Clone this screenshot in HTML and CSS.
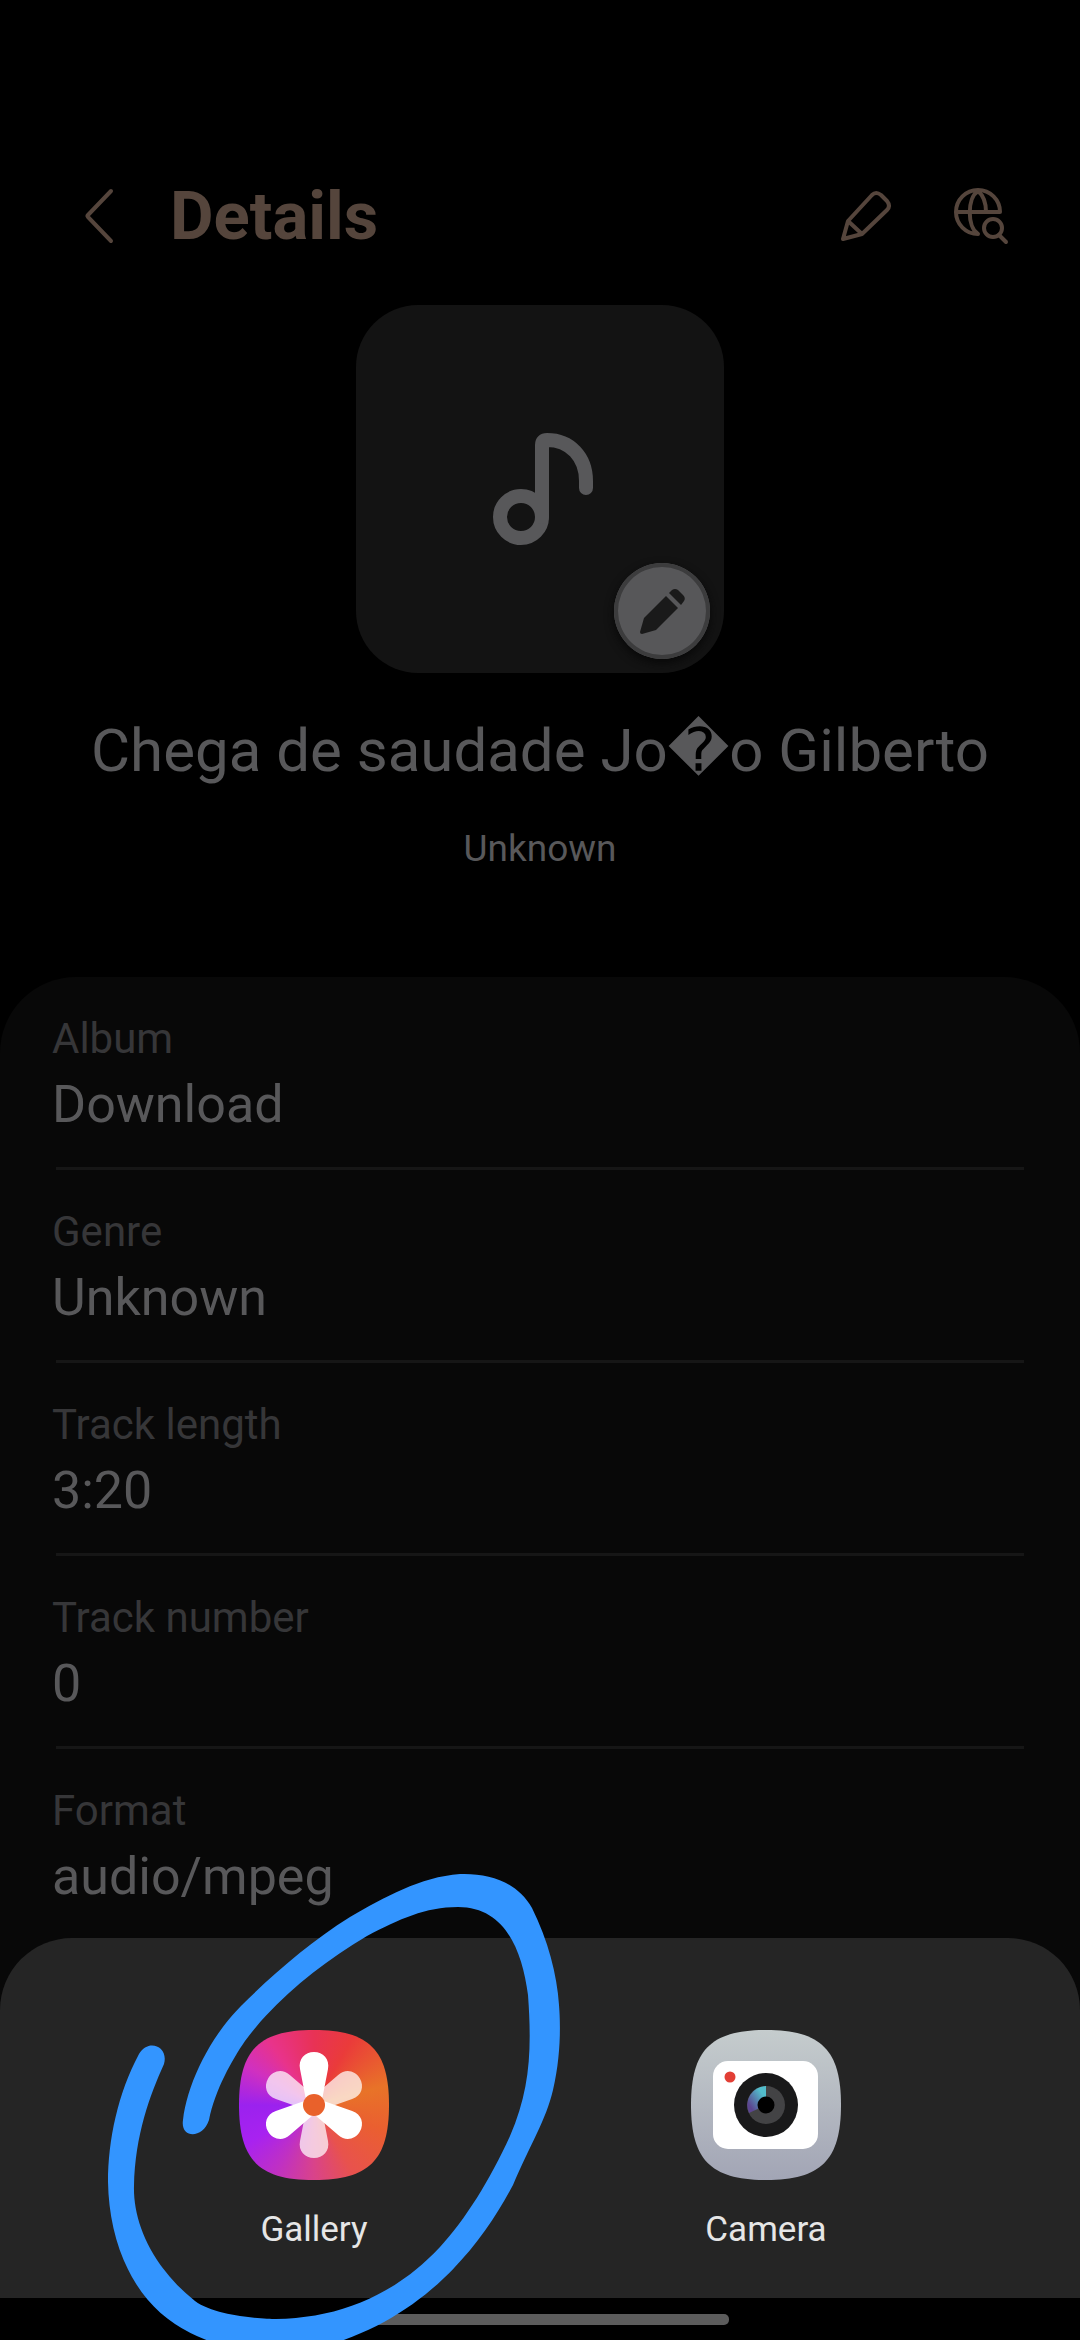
FILE: index.html
```html
<!DOCTYPE html>
<html lang="en">
<head>
    <meta charset="UTF-8">
    <meta name="viewport" content="width=device-width, initial-scale=1.0">
    <title>Details</title>
    <link rel="stylesheet" href="styles.css">
</head>
<body>
    <div class="page">
        <header class="top-bar">
            <button class="icon-button" aria-label="Back">
                <svg viewBox="0 0 60 60"><path d="M41 5 L18 29 Q17 30 18 31 L41 55"/></svg>
            </button>
            <h1 class="top-title">Details</h1>
            <button class="icon-button" aria-label="Edit">
                <svg viewBox="0 0 60 60"><path d="M12 35 L36 9 Q40 5 45 9 L51 15 Q55 20 51 24 L26 48 L7 53 Z M12 35 L26 48"/></svg>
            </button>
            <button class="icon-button" aria-label="Search the web">
                <svg viewBox="0 0 60 60">
                    <path d="M48 26 A22 22 0 1 0 26 48 M4 26 H48 M26 5 C15 12 15 41 26 48 M26 5 C32 10 34 18 34 26"/>
                    <circle cx="41" cy="42" r="9"/>
                    <path d="M47 49 L54 56"/>
                </svg>
            </button>
        </header>

        <section class="track">
            <div class="album-art">
                <svg class="note" viewBox="0 0 368 368">
                    <circle cx="165" cy="212" r="21"/>
                    <path d="M186 212 V140 Q186 135 191 135 C214 135 230 152 230 176 V183"/>
                </svg>
                <button class="edit-art" aria-label="Change image">
                    <svg viewBox="0 0 96 96">
                        <path d="M26 69 L30 55 L52 33 L64 45 L42 67 L28 71 Q26 71 26 69 Z"/>
                        <path d="M55 30 L58 27 Q61 25 64 27 L69 32 Q72 35 70 38 L67 42 Z"/>
                    </svg>
                </button>
            </div>
            <h2 class="track-title">Chega de saudade Jo<span class="bad-char">&#xFFFD;</span>o Gilberto</h2>
            <p class="track-artist">Unknown</p>
        </section>

        <dl class="details">
            <div class="detail">
                <dt>Album</dt>
                <dd>Download</dd>
            </div>
            <div class="detail">
                <dt>Genre</dt>
                <dd>Unknown</dd>
            </div>
            <div class="detail">
                <dt>Track length</dt>
                <dd>3:20</dd>
            </div>
            <div class="detail">
                <dt>Track number</dt>
                <dd>0</dd>
            </div>
            <div class="detail">
                <dt>Format</dt>
                <dd>audio/mpeg</dd>
            </div>
        </dl>
    </div>

    <div class="bottom">
        <div class="sheet">
            <button class="app">
                <span class="app-icon gallery">
                    <svg viewBox="0 0 150 150">
                        <defs>
                            <path id="petal" d="M67 70 L61 39 C59 29 66 22 75 22 S91 29 89 39 L83 70 Z"/>
                        </defs>
                        <g fill="#fff" fill-opacity="0.72">
                            <use href="#petal" transform="rotate(60 75 75)"/>
                            <use href="#petal" transform="rotate(180 75 75)"/>
                            <use href="#petal" transform="rotate(300 75 75)"/>
                        </g>
                        <g fill="#fff">
                            <use href="#petal"/>
                            <use href="#petal" transform="rotate(120 75 75)"/>
                            <use href="#petal" transform="rotate(240 75 75)"/>
                        </g>
                        <circle cx="75" cy="75" r="11" fill="#e9612b"/>
                    </svg>
                </span>
                <span>Gallery</span>
            </button>
            <button class="app">
                <span class="app-icon camera">
                    <svg viewBox="0 0 150 150">
                        <defs>
                            <linearGradient id="glint" x1="0" y1="1" x2="1" y2="0">
                                <stop offset="0.2" stop-color="#5b4590"/>
                                <stop offset="0.75" stop-color="#52bccb"/>
                            </linearGradient>
                        </defs>
                        <rect x="22" y="31" width="105" height="88" rx="15" fill="#fff"/>
                        <circle cx="39" cy="47" r="5.5" fill="#e23f35"/>
                        <circle cx="75" cy="75" r="32" fill="#19191a"/>
                        <circle cx="75" cy="75" r="19" fill="#434345"/>
                        <path d="M75 75 V56 A19 19 0 0 0 58 83 Z" fill="url(#glint)"/>
                        <circle cx="75" cy="75" r="8.5" fill="#000"/>
                    </svg>
                </span>
                <span>Camera</span>
            </button>
        </div>
        <div class="nav-bar"><div class="nav-handle"></div></div>
        <!-- hand drawn circle round the gallery app -->
        <svg class="marker" viewBox="0 0 600 580">
            <path d="M139 294 C118 333 108 380 108 422 C109 480 131 535 175 564 Q190 574 209 581 H341 C430 550 482 484 513 425 C530 385 546 360 553 330 C560 300 561 270 559 245 C557 215 548 180 532 148 C517 122 490 113 460 114 C420 117 385 137 350 157 C310 182 272 215 241 246 C209 278 187 325 183 360 C180 379 203 379 209 360 C215 330 232 300 245 281 C275 240 320 204 367 176 C400 159 425 147 458 147 C505 147 522 190 528 235 C532 290 530 330 510 376 C490 420 465 460 440 487 C395 535 340 558 276 559 C262 559 215 556 195 541 C150 505 133 460 134 426 C135 375 150 335 164 304 C169 286 148 278 139 294 Z"/>
        </svg>
    </div>
</body>
</html>
```
FILE: styles.css
```css
* {
    margin: 0;
    padding: 0;
    box-sizing: border-box;
}
body {
    background-color: #000000;
    color: #58585a;
    font-family: Roboto, "Noto Sans", sans-serif;
}
button {
    background: none;
    border: none;
    font: inherit;
    color: inherit;
}
svg {
    display: block;
}
.page {
    display: flex;
    flex-direction: column;
    height: 100vh;
    overflow: hidden;
}
.top-bar {
    display: flex;
    align-items: center;
    flex-shrink: 0;
    gap: 56px;
    height: 92px;
    margin-top: 170px;
    padding: 0 68px 0 70px;
    color: #55453c;
}
.top-title {
    flex-grow: 1;
    margin-left: -16px;
    font-size: 67px;
    font-weight: 700;
}
.icon-button {
    width: 60px;
    height: 60px;
}
.icon-button svg {
    fill: none;
    stroke: currentColor;
    stroke-width: 4;
    stroke-linecap: round;
    stroke-linejoin: round;
}
.track {
    flex-shrink: 0;
    padding-top: 43px;
    text-align: center;
}
.album-art {
    position: relative;
    width: 368px;
    height: 368px;
    margin: 0 auto;
    border-radius: 62px;
    background-color: #131313;
}
.note {
    fill: none;
    stroke: #58585a;
    stroke-width: 14;
    stroke-linecap: round;
}
.edit-art {
    position: absolute;
    right: 14px;
    bottom: 14px;
    width: 96px;
    height: 96px;
    border-radius: 50%;
    background-color: #575759;
    box-shadow: inset 0 0 0 4px #3c3c3d, 0 4px 10px #080808;
}
.edit-art svg {
    fill: #1a1a1a;
}
.track-title {
    height: 80px;
    margin-top: 38px;
    font-size: 60px;
    font-weight: 400;
    line-height: 80px;
}
.bad-char {
    font-family: "DejaVu Sans", sans-serif;
    line-height: 1;
}
.track-artist {
    margin-top: 34px;
    font-size: 37px;
    line-height: 48px;
}
.details {
    flex-grow: 1;
    margin-top: 104px;
    padding: 0 56px 0 52px;
    border-radius: 76px 76px 0 0;
    background-color: #080808;
}
.detail {
    padding-top: 38px;
}
.detail dt {
    font-size: 42px;
    line-height: 48px;
    color: #363638;
}
.detail dd {
    margin-top: 12px;
    font-size: 52px;
    line-height: 60px;
}
.detail:not(:last-child)::after {
    content: "";
    display: block;
    height: 3px;
    margin: 32px 0 0 4px;
    background-color: #161616;
}
.bottom {
    position: fixed;
    left: 0;
    right: 0;
    bottom: 0;
}
.sheet {
    display: flex;
    padding: 92px 88px 48px;
    border-radius: 72px 72px 0 0;
    background-color: #252525;
}
.app {
    flex: 1;
    display: flex;
    flex-direction: column;
    align-items: center;
    gap: 30px;
    font-size: 35px;
    line-height: 40px;
    color: #e6e6e6;
}
.app-icon {
    width: 150px;
    height: 150px;
    clip-path: path("M75 0 C130 0 150 20 150 75 C150 130 130 150 75 150 C20 150 0 130 0 75 C0 20 20 0 75 0 Z");
}
.gallery {
    background: conic-gradient(#e83255, #ea3b3a 30deg, #e87328 75deg, #ea5f30 110deg, #e8524d 150deg, #d9438a 180deg, #bf30c4 210deg, #a822f0 240deg, #9b22ee 270deg, #d030c0 300deg, #e8338b 325deg, #e83255);
}
.camera {
    background: linear-gradient(#c5cccd, #a2a5b5);
}
.nav-bar {
    height: 42px;
    padding-top: 16px;
    background-color: #000000;
}
.nav-handle {
    width: 35%;
    height: 11px;
    margin: 0 auto;
    border-radius: 5px;
    background-color: #5c5c5c;
}
.marker {
    position: absolute;
    left: 0;
    bottom: 0;
    width: 600px;
    height: 580px;
    fill: #3395ff;
    pointer-events: none;
}
```
